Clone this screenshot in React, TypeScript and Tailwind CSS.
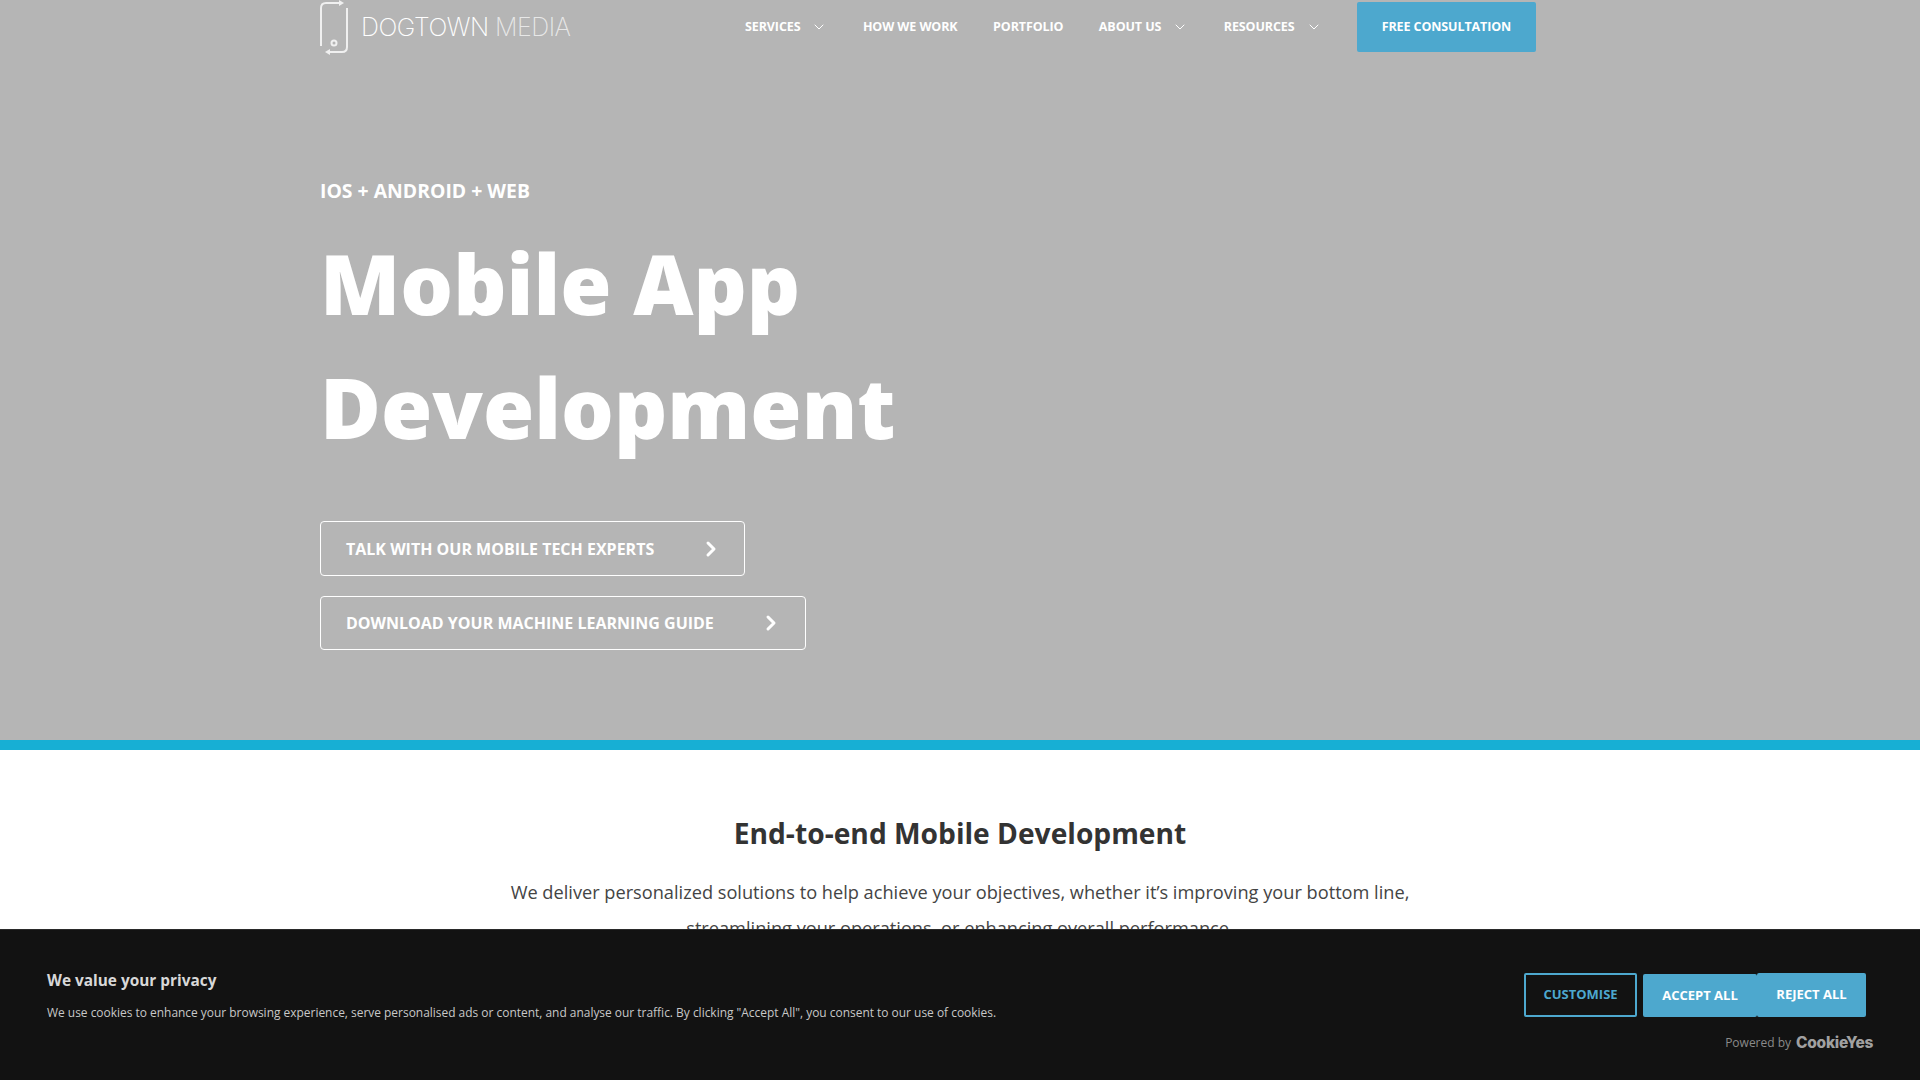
import { ChevronDown, ChevronRight } from "lucide-react";

const os = "font-['Open_Sans',sans-serif]";

function NavItem({ label, caret }: { label: string; caret?: boolean }) {
  return (
    <a className="flex items-center text-[12.5px] font-bold text-white uppercase tracking-[-0.1px]">
      {label}
      {caret && <ChevronDown className="ml-[11px] h-[16px] w-[16px] shrink-0" strokeWidth={1.5} />}
    </a>
  );
}

function Outline({ label, w, h }: { label: string; w: string; h: string }) {
  return (
    <a className={`flex items-center rounded-[4px] border border-white pl-[25px] text-[16px] font-bold text-white uppercase ${w} ${h}`}>
      <span className="whitespace-nowrap">{label}</span>
      <ChevronRight className="ml-[45px] h-[24px] w-[24px] shrink-0" strokeWidth={3} />
    </a>
  );
}

export default function App() {
  return (
    <div className={`relative h-[1080px] overflow-hidden bg-white ${os}`}>
      <section className="h-[740px] bg-[#b5b5b5] pl-[320px]">
        <header className="flex h-[54px] w-[1216px] items-start justify-between">
          <div className="flex items-center">
            <svg width="30" height="56" viewBox="0 0 30 56" fill="none" stroke="#f0f0f0" strokeWidth="2">
              <path d="M1 46V8Q1 3 6 3H21" />
              <path d="M19 0L24 3L19 6" fill="#f0f0f0" stroke="none" />
              <path d="M27 8V47Q27 52 22 52H8" />
              <path d="M10 49L5 52L10 55" fill="#f0f0f0" stroke="none" />
              <circle cx="14" cy="43" r="2.5" />
            </svg>
            <span className="ml-[11px] whitespace-nowrap font-['Inter',sans-serif] text-[25px] font-extralight text-white tracking-[-0.5px]">
              DOGTOWN <span className="text-white/70">MEDIA</span>
            </span>
          </div>
          <nav className="flex items-center pt-[2px]">
            <div className="flex w-[791px] items-center justify-between">
              <NavItem label="Services" caret />
              <NavItem label="How we work" />
              <NavItem label="Portfolio" />
              <NavItem label="About us" caret />
              <NavItem label="Resources" caret />
              <a className="flex h-[50px] w-[179px] items-center justify-center rounded-[2px] bg-[#4da8ce] text-[12.5px] font-bold text-white uppercase tracking-[-0.1px]">
                Free consultation
              </a>
            </div>
          </nav>
        </header>
        <p className="mt-[123px] text-[19.4px] leading-[27px] font-bold text-white uppercase">iOS + Android + Web</p>
        <h1 className="mt-[17px] w-[800px] text-[83px] leading-[124px] font-extrabold text-white">
          Mobile App
          <br />
          Development
        </h1>
        <div className="mt-[52px] flex flex-col items-start gap-[20px]">
          <Outline label="Talk with our mobile tech experts" w="w-[425px]" h="h-[55px]" />
          <Outline label="Download your machine learning guide" w="w-[486px]" h="h-[54px]" />
        </div>
      </section>
      <div className="h-[10px] bg-[#17afd4]" />
      <section className="text-center">
        <h2 className="mt-[63px] text-[28.2px] leading-[40px] font-bold text-[#333333]">End-to-end Mobile Development</h2>
        <p className="mt-[21px] text-[18.2px] leading-[36px] text-[#444444]">
          We deliver personalized solutions to help achieve your objectives, whether it’s improving your bottom line,
          <br />
          streamlining your operations, or enhancing overall performance.
        </p>
      </section>
      <aside className="absolute right-0 bottom-0 left-0 flex h-[151px] items-start justify-between border-t border-[#2a2a2a] bg-[#121212] pr-[54px] pl-[47px]">
        <div className="pt-[39px]">
          <h3 className="text-[15.4px] leading-[24px] font-bold text-[#d8d8d8]">We value your privacy</h3>
          <p className="mt-[8px] text-[11.95px] leading-[24px] text-[#c8c8c8]">
            We use cookies to enhance your browsing experience, serve personalised ads or content, and analyse our traffic. By clicking "Accept All", you consent to our use of cookies.
          </p>
        </div>
        <div className="flex flex-col items-end pt-[43px]">
          <div className="flex items-start">
            <button className="mr-[6px] h-[44px] w-[113px] rounded-[2px] border-2 border-[#4da8ce] text-[13px] font-bold text-[#4da8ce]">CUSTOMISE</button>
            <button className="mt-[1px] h-[43px] w-[114px] rounded-[2px] bg-[#4da8ce] text-[13px] font-bold text-white">ACCEPT ALL</button>
            <button className="h-[44px] w-[109px] rounded-[2px] bg-[#4da8ce] text-[13px] font-bold text-white">REJECT ALL</button>
          </div>
          <div className="mt-[14px] -mr-[7px] flex items-center text-[12px] text-[#8a8a8a]">
            Powered by
            <span className="ml-[5px] font-['Inter',sans-serif] text-[15.5px] font-extrabold text-[#a0a0a0] tracking-[-0.3px]">CookieYes</span>
          </div>
        </div>
      </aside>
    </div>
  );
}
